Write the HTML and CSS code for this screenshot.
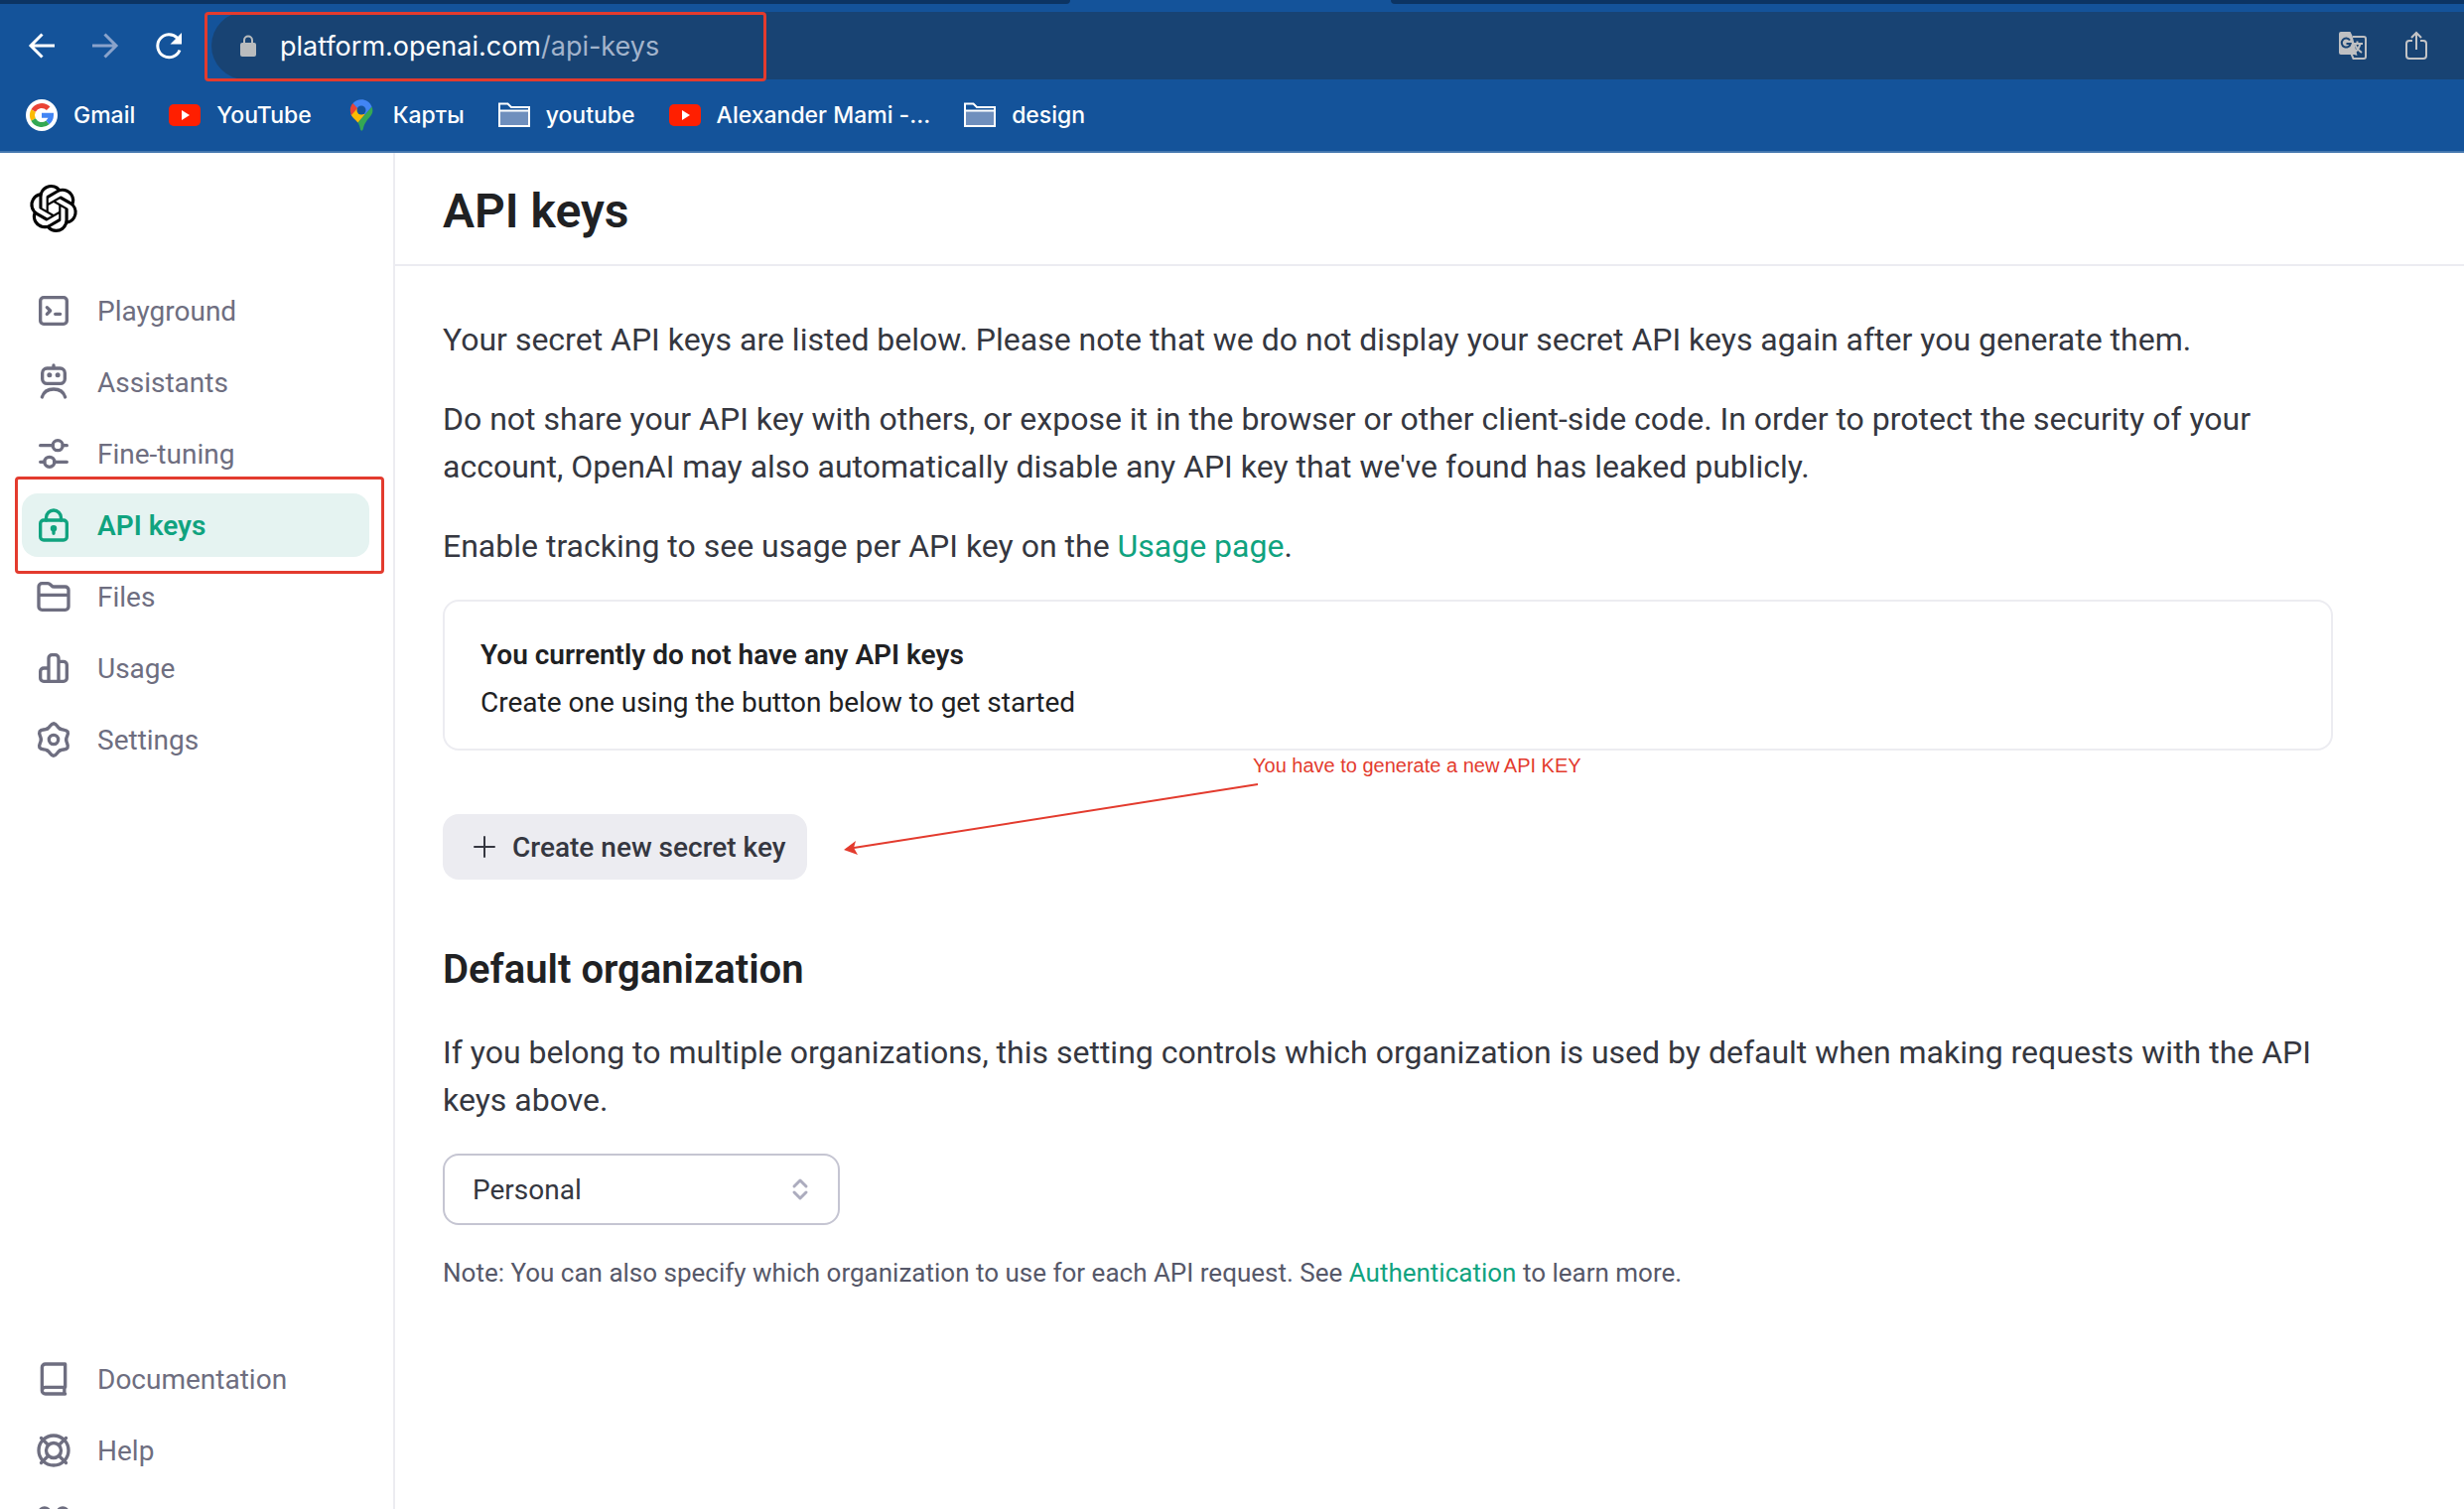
FILE: index.html
```
<!DOCTYPE html>
<html lang="en">
<head>
<meta charset="utf-8">
<title>API keys</title>
<link rel="stylesheet" href="styles.css">
</head>
<body>
<header class="browser">
  <div class="tabs"><span class="tab-left"></span><span class="tab-active"></span><span class="tab-right"></span></div>
  <div class="toolbar">
    <div class="history">
      <button class="tool" aria-label="Back"><svg width="32" height="32" viewBox="0 0 32 32" fill="none" stroke="#fff" stroke-width="3"><path d="M29 16H5M16.500 4.500 5 16l11.500 11.500"/></svg></button>
      <button class="tool" aria-label="Forward"><svg width="32" height="32" viewBox="0 0 32 32" fill="none" stroke="#8aa3cb" stroke-width="3"><path d="M3 16h24M15.500 4.500 27 16 15.500 27.500"/></svg></button>
      <button class="tool" aria-label="Reload"><svg width="32" height="32" viewBox="0 0 32 32" fill="none" stroke="#fff" stroke-width="3"><path d="M27 20.500A11.500 11.500 0 1 1 24.600 8.300"/><path d="M29 3v11.500H17.500z" fill="#fff" stroke="none"/></svg></button>
    </div>
    <div class="address">
      <svg class="padlock" width="16" height="22" viewBox="0 0 16 22"><rect y="8" width="16" height="14" rx="2" fill="#b9bcbe"/><path d="M4 9V5.500a4 4 0 0 1 8 0V9" fill="none" stroke="#b9bcbe" stroke-width="2"/></svg>
      <span class="url">platform.openai.com<span class="url-path">/api-keys</span></span>
      <span class="address-tools">
        <button class="tool" aria-label="Translate"><svg width="28" height="28" viewBox="0 0 28 28" fill="none"><path d="M14 5h11a2 2 0 0 1 2 2v18a2 2 0 0 1-2 2H14.500L12 21" stroke="#bfc0c2" stroke-width="2"/><path d="M2 0h9.500l2 4 5 20-3-1H2a2 2 0 0 1-2-2V2a2 2 0 0 1 2-2z" fill="#bfc0c2"/><path d="M11 8.500A4.500 4.500 0 1 0 11.700 12H7.500" stroke="#184373" stroke-width="2"/><path d="M14.500 12h9.500M18.500 9.500V12M21.500 12c-1 4-3 6.500-5 8M16.500 13c1 3 3.500 6 6.500 8" stroke="#bfc0c2" stroke-width="2"/></svg></button>
        <button class="tool" aria-label="Share"><svg width="22" height="30" viewBox="0 0 22 30" fill="none" stroke="#c3c4c6" stroke-width="2"><path d="M7 10H4a3 3 0 0 0-3 3v12a3 3 0 0 0 3 3h14a3 3 0 0 0 3-3V13a3 3 0 0 0-3-3h-3M11 19V2M6 7l5-5 5 5"/></svg></button>
      </span>
    </div>
  </div>
  <nav class="bookmarks" aria-label="Bookmarks">
    <a class="bookmark" href="#"><svg width="32" height="32" viewBox="0 0 32 32" fill="none" stroke-width="5"><circle cx="16" cy="16" r="16" fill="#fff"/><path d="M7.600 11.500A9.500 9.500 0 0 1 22.700 9.300" stroke="#ea4335"/><path d="M7.600 20.500a9.500 9.500 0 0 1 0-9" stroke="#fbbc05"/><path d="M22 23.400A9.500 9.500 0 0 1 7.600 20.500" stroke="#34a853"/><path d="M16 16.200h9.500A9.500 9.500 0 0 1 22 23.400" stroke="#4285f4"/></svg>Gmail</a>
    <a class="bookmark" href="#"><svg width="32" height="32" viewBox="0 0 32 32"><rect y="5" width="32" height="22" rx="5" fill="#ff1f00"/><path d="M13 11v10l8-5z" fill="#fff"/></svg>YouTube</a>
    <a class="bookmark" href="#"><svg width="32" height="32" viewBox="0 0 32 32"><path d="M26.500 7.500C28.500 12 27 15 24 18.500c-4 4.500-5 7-6 10.500-.7 3.500-2.700 3.500-3.300 0-.5-2-.9-3.500-2.200-5.500z" fill="#34a853"/><path d="M5.500 15c.7 3 4 5 7 8.500l7-8.300-7.500-8z" fill="#fbbc04"/><path d="M7.500 4C4.500 7.500 4 11 6 16l6.500-7.500z" fill="#ea4335"/><path d="M7.500 4C12-1.500 23-1.500 26.500 7.500l-7 8L12 9z" fill="#4285f4"/><circle cx="16" cy="11" r="4.500" fill="#14539a"/></svg>Карты</a>
    <a class="bookmark" href="#"><svg width="32" height="32" viewBox="0 0 32 32"><path d="M1 27V4.500h8.500L13 8h18v19z" fill="#14539a" stroke="#fff" stroke-width="2"/><path d="M2 12h28v14H2z" fill="#6f8fbd"/><path d="M1 11.500h30" stroke="#fff" stroke-width="2"/></svg>youtube</a>
    <a class="bookmark" href="#"><svg width="32" height="32" viewBox="0 0 32 32"><rect y="5" width="32" height="22" rx="5" fill="#ff1f00"/><path d="M13 11v10l8-5z" fill="#fff"/></svg>Alexander Mami -...</a>
    <a class="bookmark" href="#"><svg width="32" height="32" viewBox="0 0 32 32"><path d="M1 27V4.500h8.500L13 8h18v19z" fill="#14539a" stroke="#fff" stroke-width="2"/><path d="M2 12h28v14H2z" fill="#6f8fbd"/><path d="M1 11.500h30" stroke="#fff" stroke-width="2"/></svg>design</a>
  </nav>
</header>

<div class="app">
  <aside class="sidebar">
    <a class="logo" href="#" aria-label="OpenAI"><svg width="48" height="48" viewBox="0 0 24 24" fill="#000"><path d="M22.2819 9.8211a5.9847 5.9847 0 0 0-.5157-4.9108 6.0462 6.0462 0 0 0-6.5098-2.9A6.0651 6.0651 0 0 0 4.9807 4.1818a5.9847 5.9847 0 0 0-3.9977 2.9 6.0462 6.0462 0 0 0 .7427 7.0966 5.98 5.98 0 0 0 .511 4.9107 6.051 6.051 0 0 0 6.5146 2.9001A5.9847 5.9847 0 0 0 13.2599 24a6.0557 6.0557 0 0 0 5.7718-4.2058 5.9894 5.9894 0 0 0 3.9977-2.9001 6.0557 6.0557 0 0 0-.7475-7.0729zm-9.022 12.6081a4.4755 4.4755 0 0 1-2.8764-1.0408l.1419-.0804 4.7783-2.7582a.7948.7948 0 0 0 .3927-.6813v-6.7369l2.02 1.1686a.071.071 0 0 1 .038.052v5.5826a4.504 4.504 0 0 1-4.4945 4.4944zm-9.6607-4.1254a4.4708 4.4708 0 0 1-.5346-3.0137l.142.0852 4.783 2.7582a.7712.7712 0 0 0 .7806 0l5.8428-3.3685v2.3324a.0804.0804 0 0 1-.0332.0615L9.74 19.9502a4.4992 4.4992 0 0 1-6.1408-1.6464zM2.3408 7.8956a4.485 4.485 0 0 1 2.3655-1.9728V11.6a.7664.7664 0 0 0 .3879.6765l5.8144 3.3543-2.0201 1.1685a.0757.0757 0 0 1-.071 0l-4.8303-2.7865A4.504 4.504 0 0 1 2.3408 7.872zm16.5963 3.8558L13.1038 8.364 15.1192 7.2a.0757.0757 0 0 1 .071 0l4.8303 2.7913a4.4944 4.4944 0 0 1-.6765 8.1042v-5.6772a.79.79 0 0 0-.407-.667zm2.0107-3.0231l-.142-.0852-4.7735-2.7818a.7759.7759 0 0 0-.7854 0L9.409 9.2297V6.8974a.0662.0662 0 0 1 .0284-.0615l4.8303-2.7866a4.4992 4.4992 0 0 1 6.6802 4.66zM8.3065 12.863l-2.02-1.1638a.0804.0804 0 0 1-.038-.0567V6.0742a4.4992 4.4992 0 0 1 7.3757-3.4537l-.142.0805L8.704 5.459a.7948.7948 0 0 0-.3927.6813zm1.0976-2.3654l2.602-1.4998 2.6069 1.4998v2.9994l-2.5974 1.4997-2.6067-1.4997Z"/></svg></a>
    <nav class="menu" aria-label="Main">
      <a class="item" href="#"><svg class="icon" viewBox="0 0 24 24"><rect x="4" y="4" width="16" height="16" rx="2"/><path d="M8 10l2 2-2 2M13 14h3"/></svg>Playground</a>
      <a class="item" href="#"><svg class="icon" viewBox="0 0 24 24"><rect x="5.200" y="3.600" width="13.600" height="9.200" rx="2.800"/><path d="M12 1.800v1.500M5 21c1-3.300 3.700-4.800 7-4.800s6 1.500 7 4.800"/><circle cx="9.500" cy="7.700" r="1" fill="currentColor" stroke-width="1"/><circle cx="14.500" cy="7.700" r="1" fill="currentColor" stroke-width="1"/></svg>Assistants</a>
      <a class="item" href="#"><svg class="icon" viewBox="0 0 24 24"><path d="M4 7h7.500M17.500 7H20M4 17h2.500M12.500 17H20"/><circle cx="14.500" cy="7" r="3"/><circle cx="9.500" cy="17" r="3"/></svg>Fine-tuning</a>
      <a class="item active" href="#" aria-current="page"><svg class="icon" viewBox="0 0 24 24"><rect x="4" y="9" width="16" height="12" rx="2"/><path d="M7.500 9V7.500a4.500 4.500 0 0 1 9 0V9M12 14.500v2.500"/><circle cx="12" cy="14" r="1.200" fill="currentColor" stroke-width="1.500"/></svg>API keys</a>
      <a class="item" href="#"><svg class="icon" viewBox="0 0 24 24"><path d="M3 6a2 2 0 0 1 2-2h3.500a2 2 0 0 1 1.500.700l.8.700a2 2 0 0 0 1.500.600H19a2 2 0 0 1 2 2v10a2 2 0 0 1-2 2H5a2 2 0 0 1-2-2zM3 11h18"/></svg>Files</a>
      <a class="item" href="#"><svg class="icon" viewBox="0 0 24 24"><path d="M9 20V6a2 2 0 0 1 2-2h2a2 2 0 0 1 2 2v14M9 12H6a2 2 0 0 0-2 2v4a2 2 0 0 0 2 2h12a2 2 0 0 0 2-2v-8a2 2 0 0 0-2-2h-3"/></svg>Usage</a>
      <a class="item" href="#"><svg class="icon" viewBox="0 0 24 24"><path id="lobe" d="M19.600 12C19.600 9.900 21.300 8.900 20.500 7.200C19.400 5.600 17.600 6.450 15.800 5.420"/><use href="#lobe" transform="rotate(60 12 12)"/><use href="#lobe" transform="rotate(120 12 12)"/><use href="#lobe" transform="rotate(180 12 12)"/><use href="#lobe" transform="rotate(240 12 12)"/><use href="#lobe" transform="rotate(300 12 12)"/><circle cx="12" cy="12" r="2.800"/></svg>Settings</a>
    </nav>
    <nav class="menu menu-bottom" aria-label="Support">
      <a class="item" href="#"><svg class="icon" viewBox="0 0 24 24"><path d="M19 17V3H7a2 2 0 0 0-2 2v14a2 2 0 0 0 2 2h12M19 17H7a2 2 0 0 0-2 2M18.500 17v4"/></svg>Documentation</a>
      <a class="item" href="#"><svg class="icon" viewBox="0 0 24 24"><circle cx="12" cy="12" r="9"/><circle cx="12" cy="12" r="4.500"/><path d="M4.500 4.500l4 4M19.500 4.500l-4 4M4.500 19.500l4-4M19.500 19.500l-4-4"/></svg>Help</a>
      <a class="item" href="#" aria-label="Team"><svg class="icon" viewBox="0 0 24 24"><circle cx="6.500" cy="6.500" r="3"/><circle cx="17.500" cy="6.500" r="3"/></svg></a>
    </nav>
  </aside>

  <main class="main">
    <div class="title-bar"><h1>API keys</h1></div>
    <div class="content">
      <div class="intro">
        <p>Your secret API keys are listed below. Please note that we do not display your secret API keys again after you generate them.</p>
        <p>Do not share your API key with others, or expose it in the browser or other client-side code. In order to protect the security of your account, OpenAI may also automatically disable any API key that we've found has leaked publicly.</p>
        <p>Enable tracking to see usage per API key on the <a href="#">Usage page</a>.</p>
      </div>
      <section class="keys">
        <div class="empty">
          <strong>You currently do not have any API keys</strong>
          <span>Create one using the button below to get started</span>
        </div>
        <button class="create"><svg width="24" height="24" viewBox="0 0 24 24" fill="none" stroke="currentColor" stroke-width="2" stroke-linecap="round"><path d="M12 2v20M2 12h20"/></svg>Create new secret key</button>
        <span class="hint">You have to generate a new API KEY</span>
        <svg class="hint-arrow" width="418" height="74" viewBox="0 0 418 74"><path d="M417 0 10 64" stroke="#e33b2e" stroke-width="2"/><path d="M0 66l12-9-2 7 4 7z" fill="#e33b2e"/></svg>
      </section>
      <section class="organization">
        <h2><label for="org">Default organization</label></h2>
        <p>If you belong to multiple organizations, this setting controls which organization is used by default when making requests with the API keys above.</p>
        <div class="picker">
          <select id="org"><option>Personal</option></select>
          <svg class="picker-arrows" width="16" height="22" viewBox="0 0 16 22" fill="none" stroke="#acacbe" stroke-width="3" stroke-linecap="round" stroke-linejoin="round"><path d="M2 8l6-6 6 6M2 14l6 6 6-6"/></svg>
        </div>
        <p class="note">Note: You can also specify which organization to use for each API request. See <a href="#">Authentication</a> to learn more.</p>
      </section>
    </div>
  </main>
</div>
</body>
</html>
```
FILE: styles.css
```
*, *::before, *::after { box-sizing: border-box; }

body {
  margin: 0;
  height: 100vh;
  overflow: hidden;
  display: flex;
  flex-direction: column;
  background: #fff;
  color: #353740;
  font-family: Roboto, "Liberation Sans", sans-serif;
  font-size: 28px;
}

a { color: #10a37f; text-decoration: none; }
button, select { font: inherit; color: inherit; border: 0; background: none; }
svg { flex: none; display: block; overflow: visible; }
h1, h2, p { margin: 0; }

/* Browser frame */
.browser {
  flex: none;
  background: #14539a;
  border-bottom: 2px solid #4477af;
  color: #fff;
  font-family: Inter, "Liberation Sans", sans-serif;
}

.tabs { display: flex; height: 4px; }
.tab-left { width: 1078px; background: #0c3463; border-bottom-right-radius: 8px; }
.tab-active { width: 323px; }
.tab-right { flex: 1; background: #0c3463; border-bottom-left-radius: 8px; }

.toolbar { display: flex; padding-top: 8px; }
.history { display: flex; align-items: center; gap: 32px; padding: 0 26px; width: 213px; }
.tool { padding: 0; }

.address {
  flex: 1;
  position: relative;
  display: flex;
  align-items: center;
  height: 68px;
  padding: 0 37px 0 29px;
  background: #184373;
  border-radius: 34px 0 0 34px;
  font-size: 27px;
}
.address::after {
  content: "";
  position: absolute;
  left: -7px;
  top: 0;
  width: 566px;
  height: 70px;
  border: 3px solid #e33b2e;
  border-radius: 4px;
  pointer-events: none;
}
.url { margin-left: 24px; }
.url-path { color: #a3b4cc; }
.address-tools { display: flex; align-items: center; gap: 39px; margin-left: auto; }

.bookmarks {
  display: flex;
  align-items: center;
  gap: 34px;
  height: 72px;
  padding: 0 26px;
}
.bookmark {
  display: flex;
  align-items: center;
  gap: 16px;
  color: #fff;
  font-size: 23px;
  font-weight: 500;
}

/* Application */
.app { flex: 1; display: flex; min-height: 0; }

.sidebar {
  flex: none;
  width: 398px;
  display: flex;
  flex-direction: column;
  padding: 32px 24px 0 22px;
  border-right: 2px solid #ececf1;
}
.logo { align-self: flex-start; margin: 0 8px 47px; }
.menu { display: flex; flex-direction: column; gap: 8px; }
.menu-bottom { margin-top: auto; margin-bottom: -45px; }
.item {
  position: relative;
  display: flex;
  align-items: center;
  gap: 24px;
  height: 64px;
  padding: 0 12px;
  border-radius: 16px;
  color: #6e6e80;
}
.active { background: #e5f3f1; color: #10a37f; font-weight: 600; }
.active::after {
  content: "";
  position: absolute;
  inset: -17px -15px -17px -7px;
  border: 3px solid #e33b2e;
  border-radius: 4px;
}
.icon {
  width: 40px;
  height: 40px;
  fill: none;
  stroke: currentColor;
  stroke-width: 2;
  stroke-linecap: round;
  stroke-linejoin: round;
}

.main { flex: 1; min-width: 0; }
.title-bar {
  display: flex;
  align-items: center;
  height: 114px;
  padding: 6px 48px 0;
  border-bottom: 2px solid #ececf1;
}
h1 { color: #202123; font-size: 48px; line-height: 56px; font-weight: 600; }

.content { padding: 50px 132px 48px 48px; }
.content p { font-size: 32px; line-height: 48px; }
.intro { display: flex; flex-direction: column; gap: 32px; }

.keys { position: relative; margin-top: 30px; }
.empty {
  display: flex;
  flex-direction: column;
  padding: 30px 36px 22px;
  border: 2px solid #ececf1;
  border-radius: 16px;
  color: #202123;
  line-height: 48px;
}
.empty strong { font-weight: 600; }
.create {
  display: flex;
  align-items: center;
  gap: 16px;
  height: 66px;
  margin-top: 64px;
  padding: 0 22px 0 30px;
  border-radius: 16px;
  background: #ececf1;
  font-weight: 500;
}
.hint {
  position: absolute;
  left: 816px;
  top: 155px;
  color: #e33b2e;
  font-family: "Liberation Sans", Arial, sans-serif;
  font-size: 20px;
  line-height: 24px;
}
.hint-arrow { position: absolute; left: 404px; top: 186px; }

.organization { margin-top: 67px; }
h2 { color: #202123; font-size: 40px; line-height: 48px; font-weight: 600; margin-bottom: 35px; }
.picker { display: grid; align-items: center; width: 400px; margin: 30px 0 28px; }
.picker select {
  grid-area: 1 / 1;
  appearance: none;
  width: 100%;
  height: 72px;
  padding: 0 28px;
  border: 2px solid #c5c5d2;
  border-radius: 16px;
  background: #fff;
}
.picker-arrows { grid-area: 1 / 1; justify-self: end; margin-right: 32px; pointer-events: none; }
.content .note { color: #565869; font-size: 26px; line-height: 40px; }
```
